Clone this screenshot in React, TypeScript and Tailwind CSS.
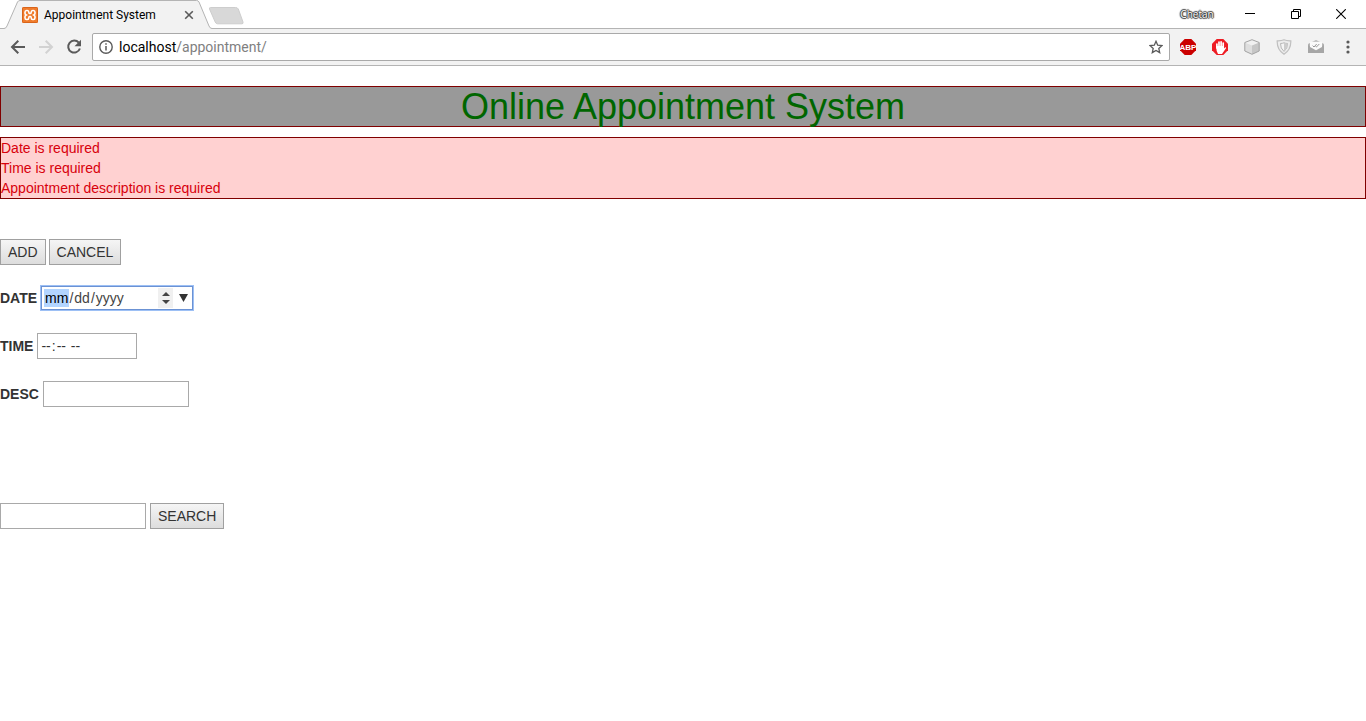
import { useState } from "react";
import type { ReactNode } from "react";

const errors = ["Date is required", "Time is required", "Appointment description is required"];

const buttonClass =
  "h-[26px] border border-[#a0a0a0] bg-linear-to-b from-[#f5f5f5] to-[#dddddd] px-[7px] text-sm leading-5 text-[#333333]";
const inputClass = "h-[26px] border border-[#a9a9a9] bg-white px-0.5 text-sm text-[#333333] outline-none";

function IconButton({ label, className, children }: { label: string; className: string; children: ReactNode }) {
  return (
    <button type="button" aria-label={label} className={`flex h-7 shrink-0 items-center justify-center ${className}`}>
      {children}
    </button>
  );
}

function TabStrip() {
  return (
    <header className="flex h-[29px] items-stretch justify-between border-b border-[#b4b4b4] bg-white">
      <div className="flex">
        <div className="relative h-[29px] w-[212px]">
          <svg className="absolute inset-0" width="212" height="29" viewBox="0 0 212 29" aria-hidden="true">
            <path d="M0 29V28.5H4Q6 28.500 7 26L17.500 2Q18.300 .5 20 .5H196.500Q198.300 .5 199 2L209 26Q210 28.500 212 28.500V29Z" fill="#f2f2f2" />
            <path d="M0 28.500H4Q6 28.500 7 26L17.500 2Q18.300 .5 20 .5H196.500Q198.300 .5 199 2L209 26Q210 28.500 212 28.500" fill="none" stroke="#b4b4b4" />
          </svg>
          <div className="relative flex h-[29px] items-center pl-[22px]">
            <svg width="16" height="16" viewBox="0 0 16 16" aria-hidden="true">
              <rect width="16" height="16" rx="1.500" fill="#f07c2c" />
              <rect x=".5" y=".5" width="15" height="15" rx="1" fill="none" stroke="#d9641a" />
              <path d="M6.800 5.800V5.200Q6.800 3.500 5.300 3.500H4.600Q3 3.500 3 5.200V6.200Q3 7.400 4.200 8Q3 8.600 3 9.800V10.800Q3 12.500 4.600 12.500H5.300Q6.800 12.500 6.800 10.800V10.200M9.200 5.800V5.200Q9.200 3.500 10.700 3.500H11.400Q13 3.500 13 5.200V6.200Q13 7.400 11.800 8Q13 8.600 13 9.800V10.800Q13 12.500 11.400 12.500H10.700Q9.200 12.500 9.200 10.800V10.200" fill="none" stroke="#fff" strokeWidth="1.600" />
              <path d="M6.300 5.600L8 6.700L9.700 5.600M6.300 10.400L8 9.300L9.700 10.400" fill="none" stroke="#fff" strokeWidth="1.400" />
            </svg>
            <span className="ml-1.5 w-[137px] whitespace-nowrap font-[Roboto,sans-serif] text-xs text-black">
              Appointment System
            </span>
            <button type="button" aria-label="Close tab" className="flex h-4 w-4 items-center justify-center">
              <svg width="10" height="10" viewBox="0 0 10 10" aria-hidden="true">
                <path d="M1.200 1.200L8.800 8.800M8.800 1.200L1.200 8.800" stroke="#5a5a5a" strokeWidth="1.600" />
              </svg>
            </button>
          </div>
        </div>
        <button type="button" aria-label="New tab" className="-ml-1 flex items-center pt-0.5">
          <svg width="36" height="19" viewBox="0 0 36 19" aria-hidden="true">
            <path d="M2.500 1.500H27.500Q29.500 1.500 30.300 3L35 16Q35.500 17.800 34 17.800H9.500Q8 17.800 7.200 16L1.500 3Q1 1.500 2.500 1.500Z" fill="#d8d8d8" stroke="#cdcdcd" />
          </svg>
        </button>
      </div>
      <div className="flex pr-0.5">
        <button
          type="button"
          className="flex w-15 items-center justify-center font-['Open_Sans',sans-serif] text-[10px] text-white [text-shadow:0_0_1px_#333,1px_0_1px_#333,-1px_0_1px_#333,0_1px_1px_#333,0_-1px_1px_#333]"
        >
          Chetan
        </button>
        <IconButton label="Minimize" className="w-[46px]">
          <svg width="10" height="11" viewBox="0 0 10 11" aria-hidden="true">
            <path d="M0 4.500H10" stroke="#000" />
          </svg>
        </IconButton>
        <IconButton label="Restore" className="w-[45px]">
          <svg width="10" height="10" viewBox="0 0 10 10" fill="none" stroke="#000" aria-hidden="true">
            <path d="M.5 2.500H7.500V9.500H.5ZM2.500 2.500V.5H9.500V7.500H7.500" />
          </svg>
        </IconButton>
        <IconButton label="Close" className="w-[46px]">
          <svg width="10" height="10" viewBox="0 0 10 10" aria-hidden="true">
            <path d="M.2 .2L9.800 9.800M9.800 .2L.2 9.800" stroke="#000" strokeWidth="1.100" />
          </svg>
        </IconButton>
      </div>
    </header>
  );
}

function Toolbar() {
  return (
    <nav className="flex h-[37px] items-center border-b border-[#b4b4b4] bg-[#f2f2f2] pr-0.5 pl-1">
      <IconButton label="Back" className="w-7">
        <svg width="16" height="16" viewBox="0 0 16 16" fill="none" stroke="#5a5a5a" strokeWidth="2" aria-hidden="true">
          <path d="M15 8H2.500M8.300 1.700L2 8L8.300 14.300" />
        </svg>
      </IconButton>
      <IconButton label="Forward" className="w-7">
        <svg width="16" height="16" viewBox="0 0 16 16" fill="none" stroke="#d2d2d2" strokeWidth="2" aria-hidden="true">
          <path d="M1 8H13.500M7.700 1.700L14 8L7.700 14.300" />
        </svg>
      </IconButton>
      <IconButton label="Reload" className="w-7">
        <svg width="16" height="16" viewBox="0 0 16 16" aria-hidden="true">
          <path d="M12.800 3.700A6 6 0 1 0 13.900 9.500" fill="none" stroke="#5a5a5a" strokeWidth="2" />
          <path d="M15 .7V7.200H8.500Z" fill="#5a5a5a" />
        </svg>
      </IconButton>
      <div className="mr-0.5 ml-1 flex h-7 min-w-0 flex-1 items-center rounded-xs border border-[#a9a9a9] bg-white pl-1.5">
        <svg width="14" height="14" viewBox="0 0 14 14" aria-hidden="true">
          <circle cx="7" cy="7" r="6.200" fill="none" stroke="#5a5a5a" strokeWidth="1.400" />
          <path d="M7 6V10.500M7 3.300V4.800" stroke="#5a5a5a" strokeWidth="1.500" />
        </svg>
        <p className="ml-1.5 flex-1 font-[Roboto,sans-serif] text-sm text-[#808080]">
          <span className="text-black">localhost</span>/appointment/
        </p>
        <button type="button" aria-label="Bookmark this page" className="flex h-6 w-[26px] items-center justify-center">
          <svg width="14" height="14" viewBox="0 0 14 14" aria-hidden="true">
            <path d="M7 1.300L8.700 5.200L13 5.600L9.800 8.400L10.700 12.600L7 10.400L3.300 12.600L4.200 8.400L1 5.600L5.300 5.200Z" fill="none" stroke="#5a5a5a" strokeWidth="1.300" />
          </svg>
        </button>
      </div>
      <IconButton label="Adblock Plus" className="w-8">
        <svg width="16" height="16" viewBox="0 0 16 16" aria-hidden="true">
          <path d="M4.700 0H11.300L16 4.700V11.300L11.300 16H4.700L0 11.300V4.700Z" fill="#cb0000" />
          <text x="8" y="11" textAnchor="middle" fill="#fff" fontFamily="Liberation Sans Narrow, Liberation Sans, sans-serif" fontSize="8" fontWeight="700">ABP</text>
        </svg>
      </IconButton>
      <IconButton label="AdBlock" className="w-8">
        <svg width="16" height="16" viewBox="0 0 16 16" aria-hidden="true">
          <path d="M4.700 0H11.300L16 4.700V11.300L11.300 16H4.700L0 11.300V4.700Z" fill="#ee1c24" />
          <path d="M4.900 5V9M7 3V8M9.100 2.800V8M11.200 4V10" stroke="#fff" strokeWidth="1.700" strokeLinecap="round" />
          <path d="M4.100 7H12V9.500L13.300 8.200Q14.400 8.200 14 9.300L11 13.500L10 15H6L4.700 12Z" fill="#fff" />
        </svg>
      </IconButton>
      <IconButton label="Cube extension" className="w-8">
        <svg width="16" height="16" viewBox="0 0 16 16" strokeLinejoin="round" aria-hidden="true">
          <path d="M8 .7L15.200 3.500V12L8 15.300L.8 12V3.500Z" fill="#f0f0f0" />
          <path d="M.8 3.500L8 6.500V15.300L.8 12Z" fill="#dedede" />
          <path d="M8 6.500L15.200 3.500V12L8 15.300Z" fill="#c6c6c6" />
          <path d="M8 .7L15.200 3.500V12L8 15.300L.8 12V3.500Z" fill="none" stroke="#a3a3a3" />
        </svg>
      </IconButton>
      <IconButton label="Shield extension" className="w-8">
        <svg width="16" height="16" viewBox="0 0 16 16" aria-hidden="true">
          <path d="M1.200 1.800Q5 2 8 .8Q11 2 14.800 1.800Q15.200 10.500 8 15.300Q.8 10.500 1.200 1.800Z" fill="#ededed" stroke="#c0c0c0" strokeWidth="1.200" />
          <path d="M4.500 4.500Q6.500 4.500 8 3.800Q9.500 4.500 11.500 4.500Q11.700 9.500 8 12.400Q4.300 9.500 4.500 4.500Z" fill="#f5f5f5" stroke="#b8b8b8" />
          <path d="M8 3.800Q9.500 4.500 11.500 4.500Q11.700 9.500 8 12.400Z" fill="#cccccc" />
        </svg>
      </IconButton>
      <IconButton label="Mail tracker" className="w-8">
        <svg width="16" height="16" viewBox="0 0 16 16" aria-hidden="true">
          <path d="M0 5L8 1L16 5V14H0Z" fill="#b5b5b5" />
          <path d="M0 6L8 11.500L16 6V14H0Z" fill="#a6a6a6" />
          <path d="M2 2.800H14V8L8 11.300L2 8Z" fill="#fafafa" />
          <path d="M4.600 6.600L6 8L8.700 5M7.500 7.300L8.400 8L11.300 5" fill="none" stroke="#8c8c8c" strokeWidth=".9" />
        </svg>
      </IconButton>
      <IconButton label="Menu" className="w-8">
        <svg width="4" height="14" viewBox="0 0 4 14" fill="#5a5a5a" aria-hidden="true">
          <circle cx="2" cy="2" r="1.600" />
          <circle cx="2" cy="7" r="1.600" />
          <circle cx="2" cy="12" r="1.600" />
        </svg>
      </IconButton>
    </nav>
  );
}

export default function App() {
  const [date, setDate] = useState("");
  return (
    <div className="min-h-screen bg-white font-['Liberation_Sans',Arial,sans-serif] text-sm leading-5 text-[#333333]">
      <TabStrip />
      <Toolbar />
      <main className="pt-5">
        <h1 className="mb-2.5 border border-[#800000] bg-[#999999] text-center text-4xl leading-[39px] text-[#006600]">
          Online Appointment System
        </h1>
        <div role="alert" className="border border-[#800000] bg-[#ffd1d1] text-[#d8000c]">
          {errors.map((error) => (
            <p key={error}>{error}</p>
          ))}
        </div>
        <form className="mt-10" noValidate>
          <div className="flex gap-[3px]">
            <button type="button" className={buttonClass}>ADD</button>
            <button type="button" className={buttonClass}>CANCEL</button>
          </div>
          <div className="mt-5 flex items-center gap-[3px]">
            <label htmlFor="date" className="font-bold">DATE</label>
            <div className="flex h-[26px] w-[154px] items-center border border-[#9dc0f5] bg-white pl-[3px] ring-1 ring-[#6b92d4] ring-inset">
              <input
                id="date"
                type="date"
                value={date}
                onChange={(event) => setDate(event.target.value)}
                className="h-5 w-[114px] bg-transparent text-sm text-[#444444] outline-none [&::-webkit-calendar-picker-indicator]:hidden [&::-webkit-datetime-edit]:p-0 [&::-webkit-datetime-edit-fields-wrapper]:p-0 [&::-webkit-datetime-edit-month-field]:bg-[#b3d5ff] [&::-webkit-datetime-edit-month-field]:py-px [&::-webkit-datetime-edit-month-field]:text-black"
              />
              <div className="flex h-5 w-[15px] flex-col items-center justify-center gap-1 bg-[#f0f0f0]">
                <button type="button" aria-label="Increase">
                  <svg className="block" width="8" height="4" viewBox="0 0 8 4" aria-hidden="true">
                    <path d="M0 4L4 0L8 4Z" fill="#444" />
                  </svg>
                </button>
                <button type="button" aria-label="Decrease">
                  <svg className="block" width="8" height="4" viewBox="0 0 8 4" aria-hidden="true">
                    <path d="M0 0L4 4L8 0Z" fill="#444" />
                  </svg>
                </button>
              </div>
              <button type="button" aria-label="Open calendar" className="flex h-5 flex-1 items-center justify-center">
                <svg width="9" height="8" viewBox="0 0 9 8" aria-hidden="true">
                  <path d="M0 0H9L4.500 8Z" fill="#333" />
                </svg>
              </button>
            </div>
          </div>
          <div className="mt-[22px] flex items-center gap-1">
            <label htmlFor="time" className="font-bold">TIME</label>
            <input
              id="time"
              type="time"
              className={`w-[100px] ${inputClass} [&::-webkit-calendar-picker-indicator]:hidden [&::-webkit-datetime-edit]:p-0`}
            />
          </div>
          <div className="mt-[22px] flex items-center gap-1">
            <label htmlFor="desc" className="font-bold">DESC</label>
            <input id="desc" type="text" className={`w-[146px] ${inputClass}`} />
          </div>
        </form>
        <form role="search" className="mt-24 flex gap-1">
          <input type="text" aria-label="Search appointments" className={`w-[146px] ${inputClass}`} />
          <button type="button" className={buttonClass}>SEARCH</button>
        </form>
      </main>
    </div>
  );
}
